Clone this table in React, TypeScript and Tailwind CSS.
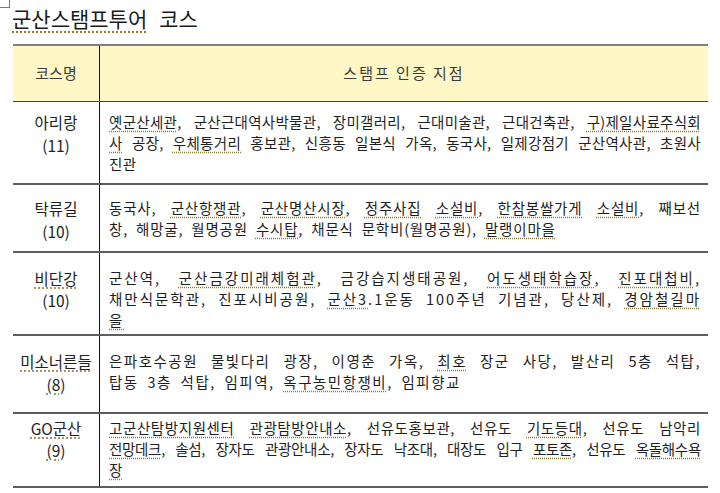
const font = "font-['Noto_Sans_CJK_KR',sans-serif]"

type Row = {
  name: string
  num: string
  lines: string[]
  height: string
  pad: string
  tracks: string[]
}

const rows: Row[] = [
  {
    name: "아리랑",
    num: "(11)",
    height: "h-[83px]",
    pad: "",
    tracks: ["tracking-[0.3px]", "tracking-[0.3px]", "tracking-[0.3px]"],
    lines: [
      "{옛군산세관}, 군산근대역사박물관, 장미갤러리, 근대미술관, 근대건축관, {구)제일사료주식회}",
      "{사} 공장, {우체통거리} 홍보관, 신흥동 일본식 가옥, 동국사, 일제강점기 군산역사관, 초원사",
      "진관",
    ],
  },
  {
    name: "탁류길",
    num: "(10)",
    height: "h-[68px]",
    pad: "",
    tracks: ["tracking-[0.8px]", "tracking-[0.8px]"],
    lines: [
      "동국사, {군산항쟁관}, {군산명산시장}, {정주사집} {소설비}, {한참봉쌀가게} {소설비}, 째보선",
      "창, 해망굴, 월명공원 {수시탑}, 채문식 문학비(월명공원), {말랭이마을}",
    ],
  },
  {
    name: "{비단강}",
    num: "(10)",
    height: "h-[83px]",
    pad: "pt-[9px]",
    tracks: ["tracking-[2px]", "tracking-[2px]", "tracking-[2px]"],
    lines: [
      "군산역, {군산금강미래체험관}, 금강습지생태공원, {어도생태학습장}, {진포대첩비},",
      "채만식문학관, 진포시비공원, {군산3}.1운동 100주년 기념관, 당산제, {경암철길마}",
      "{을}",
    ],
  },
  {
    name: "{미소너른들}",
    num: "{(8)}",
    height: "h-[78px]",
    pad: "pb-[6px]",
    tracks: ["tracking-[1.5px]", "tracking-[1.5px]"],
    lines: [
      "은파호수공원 물빛다리 광장, 이영춘 가옥, {최호} 장군 사당, 발산리 5층 석탑,",
      "탑동 3층 석탑, 임피역, {옥구농민항쟁비}, 임피향교",
    ],
  },
  {
    name: "{GO군산}",
    num: "{(9)}",
    height: "h-[74px]",
    pad: "pb-[4px]",
    tracks: ["tracking-[0.6px]", "tracking-[-0.3px]", "tracking-[-0.3px]"],
    lines: [
      "{고군산탐방지원센터} {관광탐방안내소}, 선유도홍보관, 선유도 {기도등대}, 선유도 남악리",
      "{전망데크}, 솔섬, 장자도 관광안내소, 장자도 낙조대, 대장도 입구 {포토존}, 선유도 {옥돌해수욕}",
      "{장}",
    ],
  },
]

// {...} marks the words with the dotted spell-check underline
function Marked({ text }: { text: string }) {
  const parts = text.split(/(\{[^}]+\})/).filter(Boolean)
  return (
    <>
      {parts.map((p, i) =>
        p.startsWith("{") ? (
          <span
            key={i}
            className="underline decoration-dotted decoration-[#8c7a3c] underline-offset-[3px]"
          >
            {p.slice(1, -1)}
          </span>
        ) : (
          <span key={i}>{p}</span>
        )
      )}
    </>
  )
}

export default function App() {
  return (
    <div className={`relative h-[493px] w-[720px] overflow-hidden bg-white text-[#1e1e1e] ${font}`}>
      <div className="absolute left-0 top-0 h-[8px] w-[10px] border-b border-r border-[#7a7a7a]" />

      <div className="pl-[12px] pt-[4px] text-[21px] leading-[28px] text-[#1a1a1a]">
        <span className="underline decoration-dotted decoration-[#8c7a3c] underline-offset-[4px]">
          군산스탬프투어
        </span>
        <span className="ml-[12px]">코스</span>
      </div>

      <div className="ml-[13px] mt-[12px] w-[695px] border-t-2 border-[#808080]">
        <div className="grid h-[56px] grid-cols-[87px_1fr] border-b border-[#444] bg-[#fff7c6] text-[15px] text-[#3a3a3a]">
          <div className="flex items-center justify-center border-r border-[#111]">코스명</div>
          <div className="flex items-center justify-center tracking-[2px]">스탬프 인증 지점</div>
        </div>

        {rows.map((row) => (
          <div
            key={row.name}
            className={`grid grid-cols-[87px_1fr] border-b-2 border-[#5e5e5e] ${row.height}`}
          >
            <div className={`flex items-center justify-center border-r border-[#111] ${row.pad}`}>
              <div
                className="text-center text-[15.5px] leading-[22.5px] text-[#222]"
                style={{ height: row.lines.length * 21 }}
              >
                <Marked text={row.name} />
                <br />
                <Marked text={row.num} />
              </div>
            </div>
            <div className={`flex flex-col justify-center pl-[9px] pr-[7px] ${row.pad}`}>
              {row.lines.map((line, i) =>
                i < row.lines.length - 1 ? (
                  <div
                    key={i}
                    className={`flex justify-between whitespace-nowrap text-[14.5px] leading-[21px] ${row.tracks[i]}`}
                  >
                    {line.split(" ").map((w, j) => (
                      <span key={j}>
                        <Marked text={w} />
                      </span>
                    ))}
                  </div>
                ) : (
                  <div
                    key={i}
                    className={`whitespace-nowrap text-[14.5px] leading-[21px] [word-spacing:4px] ${row.tracks[i]}`}
                  >
                    <Marked text={line} />
                  </div>
                )
              )}
            </div>
          </div>
        ))}
      </div>
    </div>
  )
}
